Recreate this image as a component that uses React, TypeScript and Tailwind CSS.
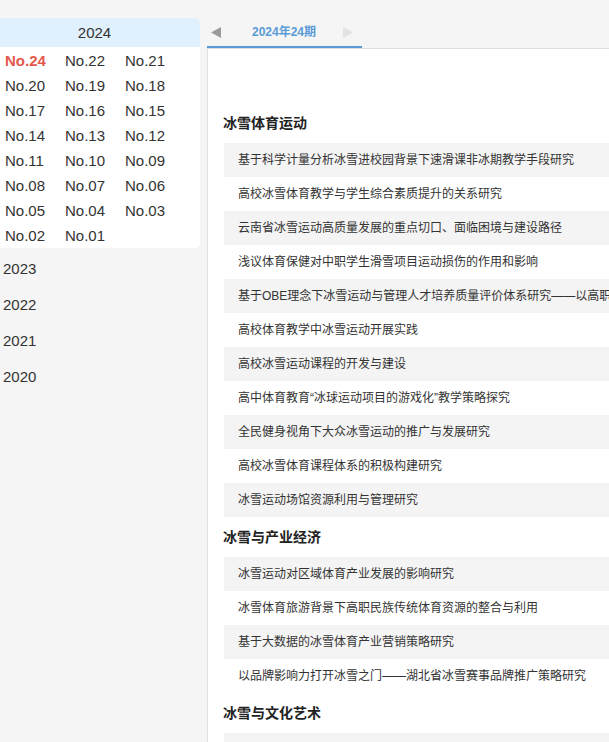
import React from "react";

const issues = [
  "No.24", "No.22", "No.21",
  "No.20", "No.19", "No.18",
  "No.17", "No.16", "No.15",
  "No.14", "No.13", "No.12",
  "No.11", "No.10", "No.09",
  "No.08", "No.07", "No.06",
  "No.05", "No.04", "No.03",
  "No.02", "No.01",
];

const years = ["2023", "2022", "2021", "2020"];

const sections: { title: string; items: string[] }[] = [
  {
    title: "冰雪体育运动",
    items: [
      "基于科学计量分析冰雪进校园背景下速滑课非冰期教学手段研究",
      "高校冰雪体育教学与学生综合素质提升的关系研究",
      "云南省冰雪运动高质量发展的重点切口、面临困境与建设路径",
      "浅议体育保健对中职学生滑雪项目运动损伤的作用和影响",
      "基于OBE理念下冰雪运动与管理人才培养质量评价体系研究——以高职院校为例",
      "高校体育教学中冰雪运动开展实践",
      "高校冰雪运动课程的开发与建设",
      "高中体育教育“冰球运动项目的游戏化”教学策略探究",
      "全民健身视角下大众冰雪运动的推广与发展研究",
      "高校冰雪体育课程体系的积极构建研究",
      "冰雪运动场馆资源利用与管理研究",
    ],
  },
  {
    title: "冰雪与产业经济",
    items: [
      "冰雪运动对区域体育产业发展的影响研究",
      "冰雪体育旅游背景下高职民族传统体育资源的整合与利用",
      "基于大数据的冰雪体育产业营销策略研究",
      "以品牌影响力打开冰雪之门——湖北省冰雪赛事品牌推广策略研究",
    ],
  },
  {
    title: "冰雪与文化艺术",
    items: [
      "冰雪文化视域下的艺术创作研究",
      "冰雪文化的传承与发展",
    ],
  },
];

export default function App() {
  return (
    <div
      className="min-h-screen w-full overflow-hidden bg-[#f5f5f5] text-[#333]"
      style={{ fontFamily: '"Liberation Sans", "Noto Sans CJK SC", sans-serif' }}
    >
      <div className="flex pt-[18px]">
        {/* Sidebar */}
        <div className="w-[200px] shrink-0">
          <div className="h-[29px] rounded-tr-[5px] bg-[#e0f0fc] pr-[11px] text-center text-[15px] leading-[29px] text-[#333]">
            2024
          </div>
          <div className="grid grid-cols-[60px_60px_60px] rounded-br-[5px] bg-white pl-[5px] pt-[1px]">
            {issues.map((n, i) => (
              <div
                key={n}
                className={
                  i === 0
                    ? "h-[25px] text-[15px] font-bold leading-[25px] text-[#e4574b]"
                    : "h-[25px] text-[15px] leading-[25px] text-[#333]"
                }
              >
                {n}
              </div>
            ))}
          </div>
          <div className="mt-[3px]">
            {years.map((y) => (
              <div key={y} className="h-[36px] pl-[3px] text-[15px] leading-[36px] text-[#333]">
                {y}
              </div>
            ))}
          </div>
        </div>

        {/* Main */}
        <div className="ml-[7px] flex min-w-0 flex-1 flex-col">
          <div className="flex h-[30px] items-end">
            <div className="flex h-[30px] w-[155px] items-center border-b-2 border-[#5b9bd5]">
              <svg width="10" height="11" viewBox="0 0 10 11" className="ml-[4px]">
                <polygon points="10,0 10,11 0,5.5" fill="#9a9a9a" />
              </svg>
              <span className="ml-[31px] text-[12px] font-bold text-[#5b9bd5]">2024年24期</span>
              <svg width="10" height="11" viewBox="0 0 10 11" className="ml-[27px]">
                <polygon points="0,0 0,11 10,5.5" fill="#e2e2e2" />
              </svg>
            </div>
            <div className="h-[1px] flex-1" />
          </div>
          <div className="flex-1 border-l border-t border-[#e0e0e0] bg-white pl-[15px] pt-[64px] pb-[40px]">
            {sections.map((s, si) => (
              <div key={s.title} className={si === 0 ? "" : "mt-[10px]"}>
                <div className="mb-[10px] h-[20px] text-[14px] font-bold leading-[20px] text-[#222]">
                  {s.title}
                </div>
                <div className="ml-[1px]">
                  {s.items.map((t, i) => (
                    <div
                      key={t}
                      className={
                        i % 2 === 0
                          ? "h-[34px] whitespace-nowrap bg-[#f4f4f4] pl-[14px] text-[12px] leading-[34px] text-[#333]"
                          : "h-[34px] whitespace-nowrap pl-[14px] text-[12px] leading-[34px] text-[#333]"
                      }
                    >
                      {t}
                    </div>
                  ))}
                </div>
              </div>
            ))}
          </div>
        </div>
      </div>
    </div>
  );
}
